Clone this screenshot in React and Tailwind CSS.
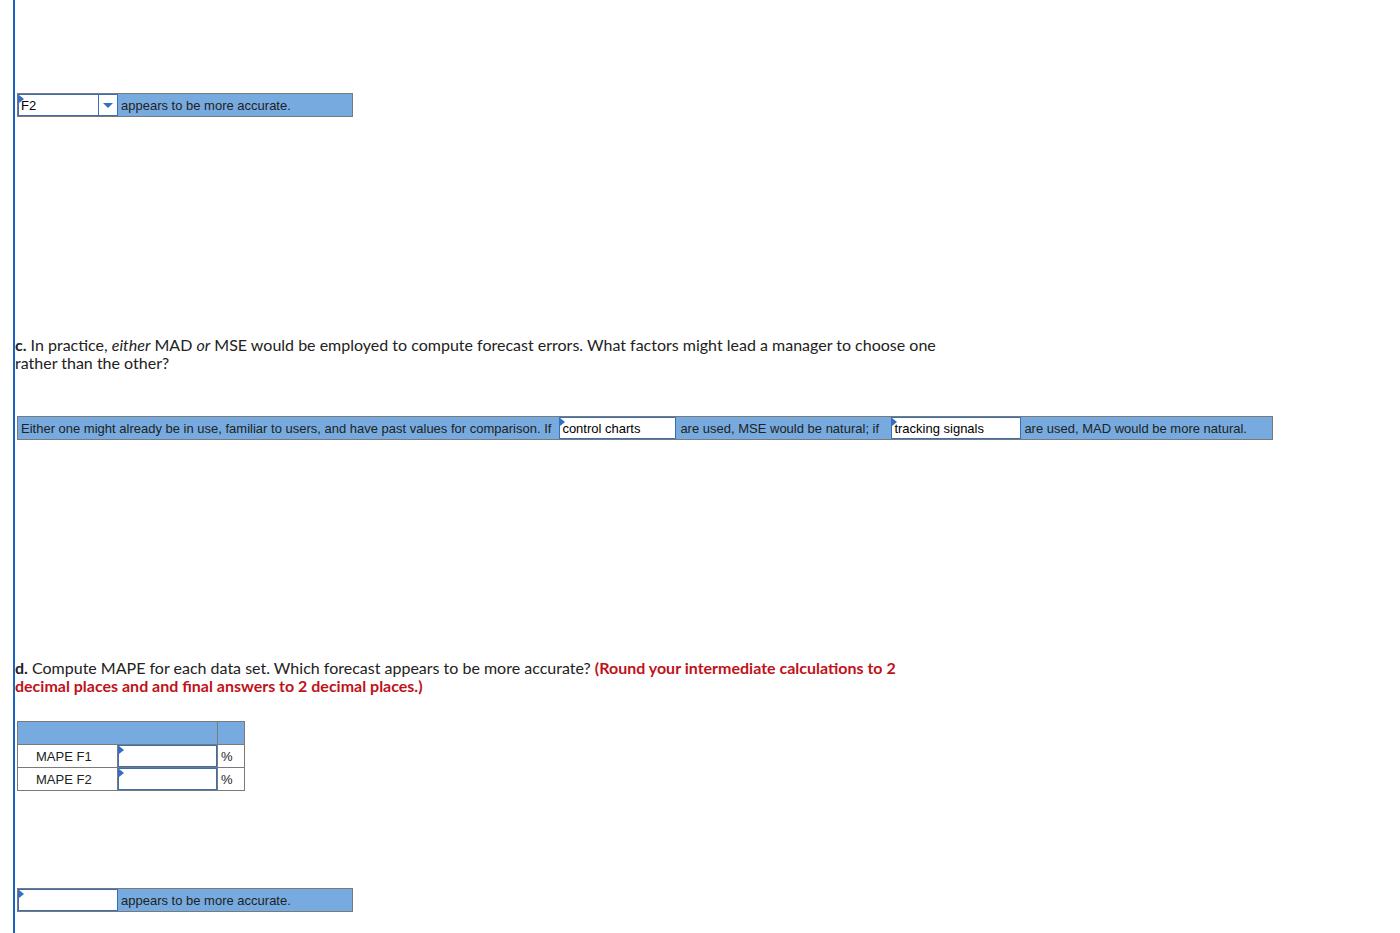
import React from "react";

const Flag = () => (
  <span className="absolute left-0 top-0 w-0 h-0 border-t-[4px] border-b-[4px] border-l-[5px] border-t-transparent border-b-transparent border-l-[#2f6fc4]" />
);

function InputCell({ value, w }) {
  return (
    <div className={`relative h-[22px] ${w} border border-[#3a6fb5] bg-white pl-[2px] pt-[1px] text-[13px] leading-[19px] text-black`}>
      <Flag />
      {value}
    </div>
  );
}

export default function App() {
  const tableFont = { fontFamily: '"Liberation Sans", Arial, sans-serif' };
  const qFont = { fontFamily: 'Lato, "Open Sans", sans-serif' };
  return (
    <div className="min-h-[933px] w-[1400px] bg-white">
      <div className="ml-[13px] min-h-[933px] border-l-2 border-[#1a62c4] pt-[93px]" >
        {/* Row 1 */}
        <div className="ml-[2px] flex h-[24px] w-[336px] border border-[#7a7a7a] bg-[#77abdf]" style={tableFont}>
          <div className="relative flex h-[22px] w-[100px] border border-[#3a6fb5] bg-white">
            <Flag />
            <span className="flex-1 pl-[2px] pt-[1px] text-[13px] leading-[19px] text-black">F2</span>
            <span className="flex w-[19px] items-center justify-center border-l border-[#3a6fb5]">
              <span className="h-0 w-0 border-l-[5px] border-r-[5px] border-t-[5px] border-l-transparent border-r-transparent border-t-[#2f6fc4]" />
            </span>
          </div>
          <div className="pl-[3px] pt-[1px] text-[13px] leading-[21px] text-[#222]">appears to be more accurate.</div>
        </div>

        {/* Question c */}
        <p className="mt-[219px] w-[960px] text-[16px] leading-[18px] text-[#222]" style={qFont}>
          <b className="font-bold">c.</b> In practice, <i>either</i> MAD <i>or</i> MSE would be employed to compute forecast errors. What factors might lead a manager to choose one
          <br />rather than the other?
        </p>

        {/* Row c */}
        <div className="ml-[2px] mt-[44px] flex h-[24px] w-[1256px] items-stretch border border-[#7a7a7a] bg-[#77abdf] text-[13px] text-[#222]" style={tableFont}>
          <div className="whitespace-nowrap pl-[3px] pr-[8px] pt-[1px] leading-[21px]">
            Either one might already be in use, familiar to users, and have past values for comparison. If
          </div>
          <InputCell value="control charts" w="w-[117px]" />
          <div className="w-[215px] whitespace-nowrap pl-[4px] pt-[1px] leading-[21px]">are used, MSE would be natural; if</div>
          <InputCell value="tracking signals" w="w-[130px]" />
          <div className="whitespace-nowrap pl-[3px] pt-[1px] leading-[21px]">are used, MAD would be more natural.</div>
        </div>

        {/* Question d */}
        <p className="mt-[219px] w-[960px] text-[16px] leading-[18px] text-[#222]" style={qFont}>
          <b className="font-bold">d.</b> Compute MAPE for each data set. Which forecast appears to be more accurate?{" "}
          <b className="font-bold text-[#c0121a]">(Round your intermediate calculations to 2
          <br />decimal places and and final answers to 2 decimal places.)</b>
        </p>

        {/* Table d */}
        <table className="ml-[2px] mt-[26px] border-collapse text-[13px] text-[#222]" style={tableFont}>
          <tbody>
            <tr className="h-[23px] bg-[#77abdf]">
              <td colSpan={2} className="w-[200px] border border-[#7a7a7a]"></td>
              <td className="w-[27px] border border-[#7a7a7a]"></td>
            </tr>
            {["MAPE F1", "MAPE F2"].map((l) => (
              <tr key={l} className="h-[23px]">
                <td className="w-[100px] border border-[#7a7a7a] p-0 pl-[18px] leading-[21px]">{l}</td>
                <td className="w-[100px] border border-[#7a7a7a] p-0">
                  <div className="relative h-[22px] w-full border border-[#3a6fb5] bg-white">
                    <Flag />
                  </div>
                </td>
                <td className="border border-[#7a7a7a] p-0 pl-[3px] leading-[21px]">%</td>
              </tr>
            ))}
          </tbody>
        </table>

        {/* Final row */}
        <div className="ml-[2px] mt-[97px] flex h-[24px] w-[336px] border border-[#7a7a7a] bg-[#77abdf]" style={tableFont}>
          <div className="relative h-[22px] w-[100px] border border-[#3a6fb5] bg-white">
            <Flag />
          </div>
          <div className="pl-[3px] pt-[1px] text-[13px] leading-[21px] text-[#222]">appears to be more accurate.</div>
        </div>
      </div>
    </div>
  );
}
